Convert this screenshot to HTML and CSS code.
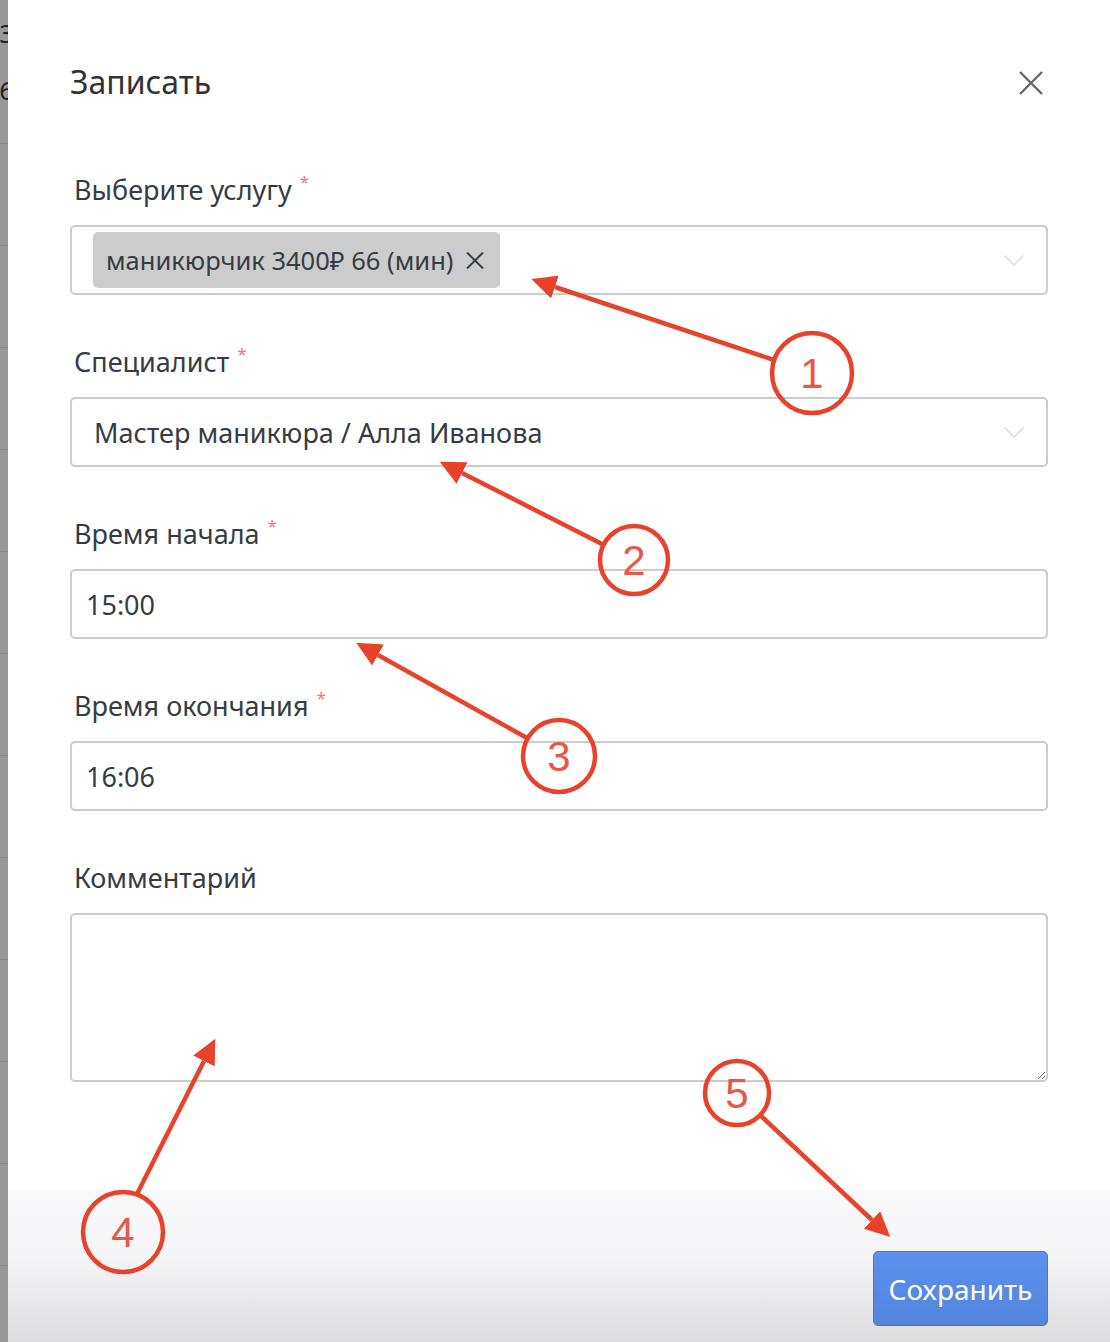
FILE: index.html
```html
<!DOCTYPE html>
<html lang="ru">
    <head>
        <meta charset="utf-8">
        <title>Записать</title>
        <link rel="stylesheet" href="styles.css">
    </head>
    <body>
        <div class="page">
            <!-- what is left visible of the calendar behind the modal -->
            <div class="backdrop">
                <div class="bg-head">
                    <span>3</span>
                    <span>6</span>
                </div>
                <div class="bg-row"></div>
                <div class="bg-row"></div>
                <div class="bg-row"></div>
                <div class="bg-row"></div>
                <div class="bg-row"></div>
                <div class="bg-row"></div>
                <div class="bg-row"></div>
                <div class="bg-row"></div>
                <div class="bg-row"></div>
                <div class="bg-row"></div>
                <div class="bg-row"></div>
                <div class="bg-row"></div>
            </div>

            <div class="modal">
                <div class="modal-header">
                    <h2 class="modal-title">Записать</h2>
                    <button class="close-btn" aria-label="Закрыть">
                        <svg width="24" height="24" viewBox="0 0 24 24">
                            <path d="M1 1 L23 23 M23 1 L1 23" stroke="#666" stroke-width="2.4" fill="none"/>
                        </svg>
                    </button>
                </div>

                <div class="modal-body">
                    <div class="form-group">
                        <label class="form-label">Выберите услугу <span class="req">*</span></label>
                        <div class="select">
                            <span class="tag">
                                маникюрчик 3400₽ 66 (мин)
                                <svg class="tag-remove" width="18" height="17" viewBox="0 0 18 17">
                                    <path d="M1 0.5 L17 16.5 M17 0.5 L1 16.5" stroke="#3a3f46" stroke-width="2" fill="none"/>
                                </svg>
                            </span>
                            <svg class="chevron" width="20" height="11" viewBox="0 0 20 11">
                                <path d="M0.5 0.5 L10 10 L19.5 0.5" stroke="#dadade" stroke-width="1.5" fill="none"/>
                            </svg>
                        </div>
                    </div>

                    <div class="form-group">
                        <label class="form-label">Специалист <span class="req">*</span></label>
                        <div class="select select-text">
                            <span class="select-value">Мастер маникюра / Алла Иванова</span>
                            <svg class="chevron" width="20" height="11" viewBox="0 0 20 11">
                                <path d="M0.5 0.5 L10 10 L19.5 0.5" stroke="#dadade" stroke-width="1.5" fill="none"/>
                            </svg>
                        </div>
                    </div>

                    <div class="form-group">
                        <label class="form-label">Время начала <span class="req">*</span></label>
                        <input class="form-input" type="text" value="15:00">
                    </div>

                    <div class="form-group">
                        <label class="form-label">Время окончания <span class="req">*</span></label>
                        <input class="form-input" type="text" value="16:06">
                    </div>

                    <div class="form-group">
                        <label class="form-label">Комментарий</label>
                        <textarea class="form-textarea"></textarea>
                    </div>
                </div>

                <div class="modal-footer">
                    <button class="btn-save">Сохранить</button>
                </div>
            </div>
        </div>

        <!-- red hand-drawn markers placed over the screenshot -->
        <svg class="annotations" width="1110" height="1342" viewBox="0 0 1110 1342">
            <defs>
                <marker id="head" viewBox="0 0 25 24" refX="0" refY="12" markerWidth="25" markerHeight="24" markerUnits="userSpaceOnUse" orient="auto">
                    <path d="M0 0 L25 12 L0 24 z" fill="#e8432a"/>
                </marker>
            </defs>
            <g stroke="#e8432a" stroke-width="4.5" fill="none">
                <circle cx="812" cy="373" r="40"/>
                <circle cx="634" cy="560" r="34"/>
                <circle cx="559" cy="756" r="36"/>
                <circle cx="123" cy="1232" r="40"/>
                <circle cx="737" cy="1093" r="32"/>
                <line x1="774" y1="360" x2="555" y2="287" marker-end="url(#head)"/>
                <line x1="604" y1="545" x2="462" y2="473" marker-end="url(#head)"/>
                <line x1="527" y1="738" x2="378" y2="655" marker-end="url(#head)"/>
                <line x1="136" y1="1196" x2="204" y2="1061" marker-end="url(#head)"/>
                <line x1="760" y1="1115" x2="872" y2="1220" marker-end="url(#head)"/>
            </g>
            <g class="marker-num" text-anchor="middle">
                <text x="812" y="388">1</text>
                <text x="634" y="575">2</text>
                <text x="559" y="771">3</text>
                <text x="123" y="1247">4</text>
                <text x="737" y="1108">5</text>
            </g>
        </svg>
    </body>
</html>
```

FILE: styles.css
```css
body {
    margin: 0;
    font-family: "Noto Sans", "Open Sans", sans-serif;
    color: #363c44;
    background: #fff;
    position: relative;
    width: 1110px;
    height: 1342px;
    overflow: hidden;
}

.page {
    display: flex;
    height: 1342px;
}

.backdrop {
    width: 8px;
    flex: none;
    background-color: #999999;
    overflow: hidden;
}

.bg-head {
    height: 143px;
    display: flex;
    flex-direction: column;
    align-items: flex-end;
    padding-top: 18px;
    box-sizing: border-box;
    font-size: 26px;
    line-height: 30px;
    color: #222;
}

.bg-head span {
    margin-right: -6px;
}

.bg-head span + span {
    margin-top: 27px;
}

.bg-row {
    height: 102px;
    border-top: 1px solid #8a8a8a;
    box-sizing: border-box;
}

.modal {
    flex: 1;
    display: flex;
    flex-direction: column;
    background-color: #fff;
}

.modal-header {
    display: flex;
    align-items: center;
    justify-content: space-between;
    padding: 60px 67px 0 62px;
}

.modal-title {
    margin: 0;
    font-size: 32px;
    line-height: 44px;
    font-weight: normal;
    color: #333;
}

.close-btn {
    border: none;
    background: none;
    padding: 0;
    width: 24px;
    height: 24px;
    margin-top: 2px;
    cursor: pointer;
}

.close-btn svg {
    display: block;
}

.modal-body {
    flex: 1;
    padding: 68px 62px 0 62px;
}

.form-group {
    margin-bottom: 49px;
}

.form-label {
    display: block;
    height: 36px;
    padding-left: 4px;
    font-size: 27px;
    line-height: 36px;
    margin-bottom: 17px;
}

.req {
    color: #ec7a70;
    font-size: 17px;
    line-height: 0;
    vertical-align: 12px;
    margin-left: 1px;
}

.select,
.form-input,
.form-textarea {
    display: block;
    width: 100%;
    box-sizing: border-box;
    border: 2px solid #cccccc;
    border-radius: 5px;
    background-color: #fff;
    font-family: inherit;
    color: #363c44;
}

.select {
    height: 70px;
    display: flex;
    align-items: center;
    padding: 0 22px 0 21px;
}

.select-text {
    padding-left: 22px;
    font-size: 27px;
}

.select-value {
    flex: 1;
}

.tag {
    display: flex;
    align-items: center;
    gap: 13px;
    height: 56px;
    padding: 0 16px 0 13px;
    background-color: #cccccc;
    border-radius: 5px;
    font-size: 25.5px;
}

.chevron {
    margin-left: auto;
}

.form-input {
    height: 70px;
    padding: 0 14px;
    font-size: 27px;
    outline: none;
}

.form-textarea {
    height: 169px;
    font-size: 27px;
    outline: none;
}

.modal-footer {
    height: 152px;
    display: flex;
    justify-content: flex-end;
    padding: 61px 62px 0 0;
    box-sizing: border-box;
    background: linear-gradient(#f9f9fb 0%, #f5f5f7 45%, #dcdcde 100%);
}

.btn-save {
    width: 175px;
    height: 75px;
    border: 1px solid #4a78c8;
    border-radius: 5px;
    background: linear-gradient(#5c90f0, #5385dc);
    color: #fff;
    font-family: inherit;
    font-size: 28px;
    cursor: pointer;
}

.annotations {
    position: absolute;
    top: 0;
    left: 0;
    pointer-events: none;
}

.marker-num {
    font-family: "Liberation Sans", Arial, sans-serif;
    font-size: 42px;
    fill: #e8584a;
}
```
